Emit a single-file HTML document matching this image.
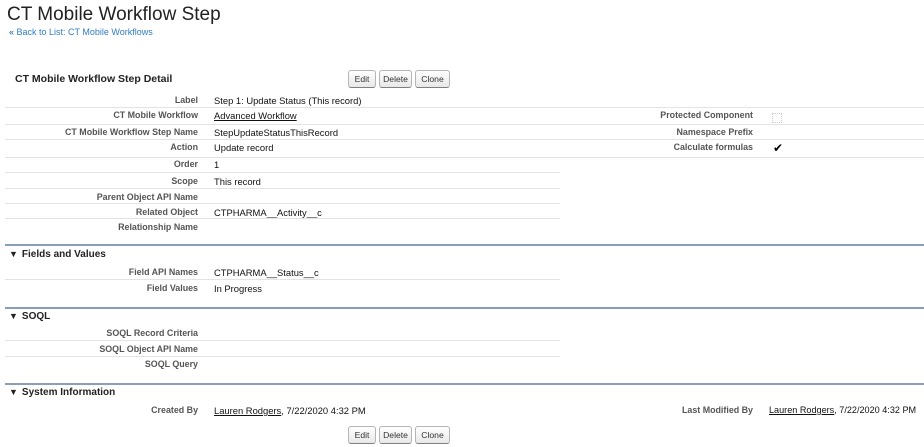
<!DOCTYPE html>
<html><head><style>
body{margin:0;width:924px;height:447px;background:#fff;font-family:"Liberation Sans",Arial,sans-serif;position:relative;overflow:hidden;color:#000}
.a{position:absolute;white-space:nowrap}
.l{position:absolute;right:726px;font-size:8.9px;font-weight:bold;color:#555;white-space:nowrap}
.r{position:absolute;right:171px;font-size:8.9px;font-weight:bold;color:#555;white-space:nowrap}
.v{position:absolute;left:214px;font-size:9.4px;white-space:nowrap;color:#111}
.ln{position:absolute;left:5px;height:1px;background:#e3e3e7}
.bar{position:absolute;left:5px;right:0;height:2px;background:#8a9dbd}
.sh{position:absolute;left:9px;font-size:10px;font-weight:bold;color:#222}
.sh b{font-size:9px;margin-right:4px}
.btn{position:absolute;height:16px;border:1px solid #b5b5b5;border-bottom-color:#7f7f7f;border-radius:3px;background:linear-gradient(#fff,#e8e8e8);font-size:8.6px;color:#333;text-align:center;line-height:16px}
u{text-decoration:underline}
</style></head><body>
<div class="a" style="left:7px;top:4px;font-size:19px;color:#222">CT Mobile Workflow Step</div>
<div class="a" style="left:9px;top:27px;font-size:9px;color:#015ba7">« <span style="color:#2f7ec1">Back to List: CT Mobile Workflows</span></div>
<div class="a" style="left:15px;top:73px;font-size:10.5px;font-weight:bold;color:#222">CT Mobile Workflow Step Detail</div>
<div class="btn" style="left:348px;top:70px;width:26px">Edit</div>
<div class="btn" style="left:379px;top:70px;width:31px">Delete</div>
<div class="btn" style="left:415px;top:70px;width:33px">Clone</div>

<div class="l" style="top:95px">Label</div><div class="v" style="top:95px">Step 1: Update Status (This record)</div>
<div class="ln" style="top:107px;right:0"></div>
<div class="l" style="top:110px">CT Mobile Workflow</div><div class="v" style="top:110px"><u>Advanced Workflow</u></div>
<div class="r" style="top:110px">Protected Component</div>
<div class="a" style="left:772px;top:113px;width:8px;height:8px;border:1px dotted #ccc"></div>
<div class="ln" style="top:124px;right:0"></div>
<div class="l" style="top:127px">CT Mobile Workflow Step Name</div><div class="v" style="top:127px">StepUpdateStatusThisRecord</div>
<div class="r" style="top:127px">Namespace Prefix</div>
<div class="ln" style="top:139px;right:0"></div>
<div class="l" style="top:142px">Action</div><div class="v" style="top:142px">Update record</div>
<div class="r" style="top:142px">Calculate formulas</div>
<div class="a" style="left:773px;top:141px;font-size:12px">✔</div>
<div class="ln" style="top:157px;right:0"></div>
<div class="l" style="top:159px">Order</div><div class="v" style="top:159px">1</div>
<div class="ln" style="top:172px;width:555px"></div>
<div class="l" style="top:176px">Scope</div><div class="v" style="top:176px">This record</div>
<div class="ln" style="top:188px;width:555px"></div>
<div class="l" style="top:192px">Parent Object API Name</div>
<div class="ln" style="top:203px;width:555px"></div>
<div class="l" style="top:207px">Related Object</div><div class="v" style="top:207px">CTPHARMA__Activity__c</div>
<div class="ln" style="top:218px;width:555px"></div>
<div class="l" style="top:222px">Relationship Name</div>

<div class="bar" style="top:244px"></div>
<div class="sh" style="top:249px"><b>▼</b>Fields and Values</div>
<div class="l" style="top:267px">Field API Names</div><div class="v" style="top:267px">CTPHARMA__Status__c</div>
<div class="ln" style="top:279px;width:555px"></div>
<div class="l" style="top:283px">Field Values</div><div class="v" style="top:283px">In Progress</div>

<div class="bar" style="top:307px"></div>
<div class="sh" style="top:311px"><b>▼</b>SOQL</div>
<div class="l" style="top:328px">SOQL Record Criteria</div>
<div class="ln" style="top:340px;width:555px"></div>
<div class="l" style="top:344px">SOQL Object API Name</div>
<div class="ln" style="top:356px;width:555px"></div>
<div class="l" style="top:359px">SOQL Query</div>

<div class="bar" style="top:383px"></div>
<div class="sh" style="top:387px"><b>▼</b>System Information</div>
<div class="l" style="top:405px">Created By</div><div class="v" style="top:405px"><u>Lauren Rodgers</u>, 7/22/2020 4:32 PM</div>
<div class="r" style="top:405px">Last Modified By</div><div class="a" style="left:769px;top:405px;font-size:9.1px;color:#111"><u>Lauren Rodgers</u>, 7/22/2020 4:32 PM</div>
<div class="btn" style="left:348px;top:426px;width:26px">Edit</div>
<div class="btn" style="left:379px;top:426px;width:31px">Delete</div>
<div class="btn" style="left:415px;top:426px;width:33px">Clone</div>
</body></html>
